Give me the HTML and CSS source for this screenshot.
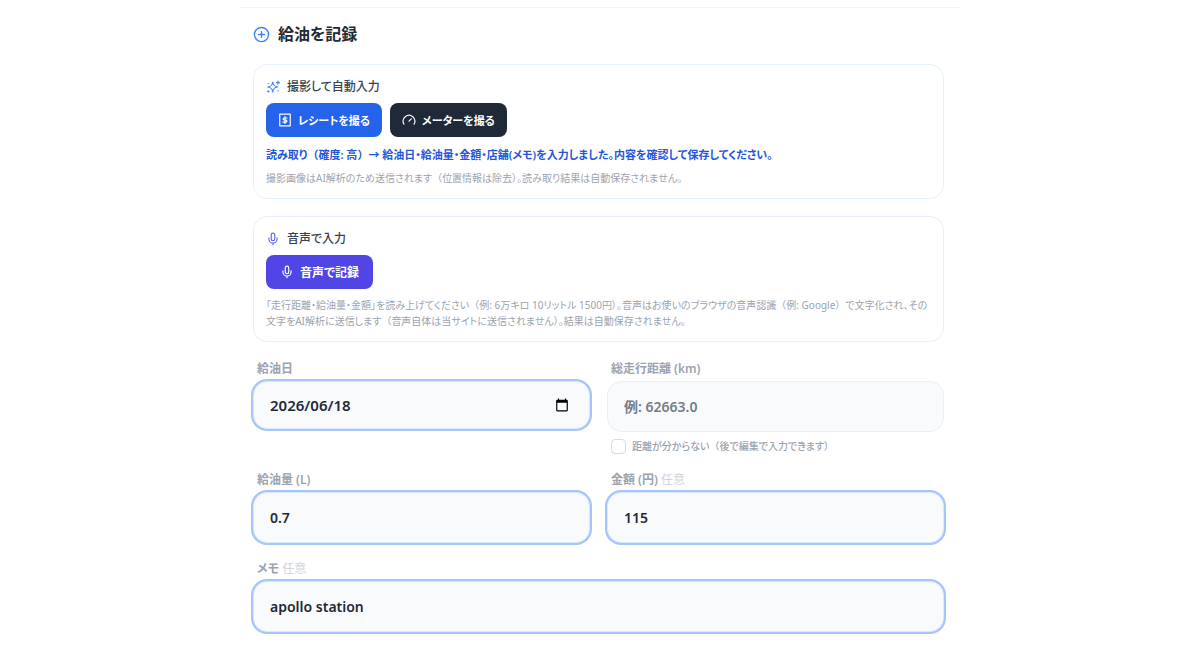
FILE: index.html
```html
<!DOCTYPE html>
<html lang="ja">
<head>
<meta charset="utf-8">
<meta name="viewport" content="width=device-width, initial-scale=1">
<title>給油を記録</title>
<link rel="stylesheet" href="styles.css">
</head>
<body>
<main class="page">
  <h1 class="title">
    <svg class="icon icon-title" viewBox="0 0 24 24" aria-hidden="true"><circle cx="12" cy="12" r="10"/><path d="M8 12h8M12 8v8"/></svg>
    給油を記録
  </h1>
  <form class="form">
    <section class="card card-photo">
      <h2 class="card-title">
        <svg class="icon icon-card" viewBox="0 0 24 24" aria-hidden="true"><path d="M11.500 3.500c.8 5.900 2.600 7.700 8.500 8.500-5.900.8-7.700 2.600-8.500 8.500-.8-5.900-2.600-7.700-8.500-8.500 5.900-.8 7.700-2.600 8.500-8.500zM20.500 2v5M18 4.500h5M3 19.500h2M4 18.500v2M3.500 6h.5M20.500 18.500h.5"/></svg>
        撮影して自動入力
      </h2>
      <div class="actions">
        <button type="button" class="btn btn-blue">
          <svg class="icon icon-btn" viewBox="0 0 24 24" aria-hidden="true"><path d="M3 2h18v20H3zM15.500 8.500h-5a1.750 1.750 0 0 0 0 3.500h3a1.750 1.750 0 0 1 0 3.500h-5M12 6v12"/></svg>
          レシートを撮る
        </button>
        <button type="button" class="btn btn-dark">
          <svg class="icon icon-btn" viewBox="0 0 24 24" aria-hidden="true"><path d="M12 14l4-4M3.340 19a10 10 0 1 1 17.320 0"/></svg>
          メーターを撮る
        </button>
      </div>
      <p class="result">読み取り<span class="full">（</span>確度: 高<span class="full">）</span>→ 給油日・給油量・金額・店舗(メモ)を入力しました。内容を確認して保存してください。</p>
      <p class="note">撮影画像はAI解析のため送信されます<span class="full">（</span>位置情報は除去）。読み取り結果は自動保存されません。</p>
    </section>

    <section class="card card-voice">
      <h2 class="card-title">
        <svg class="icon icon-card" viewBox="0 0 24 24" aria-hidden="true"><rect x="9" y="2" width="6" height="13" rx="3"/><path d="M19 10v2a7 7 0 0 1-14 0v-2M12 19v3"/></svg>
        音声で入力
      </h2>
      <div class="actions">
        <button type="button" class="btn btn-indigo">
          <svg class="icon icon-btn" viewBox="0 0 24 24" aria-hidden="true"><rect x="9" y="2" width="6" height="13" rx="3"/><path d="M19 10v2a7 7 0 0 1-14 0v-2M12 19v3"/></svg>
          音声で記録
        </button>
      </div>
      <p class="note">「走行距離・給油量・金額」を読み上げてください<span class="full">（</span>例: 6万キロ 10リットル 1500円）。音声はお使いのブラウザの音声認識<span class="full">（</span>例: Google<span class="full">）</span>で文字化され、その文字をAI解析に送信します<span class="full">（</span>音声自体は当サイトに送信されません）。結果は自動保存されません。</p>
    </section>

    <div class="fields">
      <div class="field">
        <label class="label" for="date">給油日</label>
        <div class="date-box filled">
          <input class="date-input" id="date" type="text" inputmode="numeric" value="2026/06/18">
          <button type="button" class="date-btn" aria-label="カレンダーを開く">
            <svg class="icon-date" viewBox="0 0 24 24" aria-hidden="true"><path d="M20 3h-1V1h-2v2H7V1H5v2H4c-1.100 0-2 .9-2 2v16c0 1.100.9 2 2 2h16c1.100 0 2-.9 2-2V5c0-1.100-.9-2-2-2zm0 18H4V8h16v13z"/></svg>
          </button>
        </div>
      </div>
      <div class="field">
        <label class="label" for="odo">総走行距離 (km)</label>
        <input class="input" id="odo" type="text" inputmode="decimal" placeholder="例: 62663.0">
        <label class="check"><input class="check-box" type="checkbox"><span>距離が分からない<span class="full">（</span>後で編集で入力できます）</span></label>
      </div>
      <div class="field">
        <label class="label" for="liters">給油量 (L)</label>
        <input class="input filled" id="liters" type="text" inputmode="decimal" value="0.7">
      </div>
      <div class="field">
        <label class="label" for="yen">金額 (円) <span class="optional">任意</span></label>
        <input class="input filled" id="yen" type="text" inputmode="numeric" value="115">
      </div>
      <div class="field field-wide">
        <label class="label" for="memo">メモ <span class="optional">任意</span></label>
        <input class="input filled" id="memo" type="text" value="apollo station">
      </div>
    </div>
  </form>
</main>
</body>
</html>
```
FILE: styles.css
```css
* {
  box-sizing: border-box;
}

body {
  margin: 0;
  padding-top: 7px;
  background: #fff;
  color: #1f2937;
  font-family: "Noto Sans", "Noto Sans CJK JP", sans-serif;
  font-feature-settings: "palt";
  text-spacing-trim: space-all;
}

.page {
  max-width: 720px;
  margin: 0 auto;
  padding: 15px 16px 16px 13px;
  border-top: 1px solid #f3f4f6;
}

.full {
  font-feature-settings: normal;
}

.icon {
  flex: none;
  fill: none;
  stroke: currentColor;
  stroke-width: 2;
  stroke-linecap: round;
  stroke-linejoin: round;
}

.title {
  display: flex;
  align-items: center;
  gap: 8px;
  margin: 0 0 18px;
  font-size: 16px;
  line-height: 23px;
  font-weight: 600;
}

.icon-title {
  width: 17px;
  height: 17px;
  color: #3b82f6;
}

.card {
  margin-bottom: 17px;
  padding: 13px 12px 12px;
  border: 1px solid #e6f0ff;
  border-radius: 14px;
}

.card-voice {
  margin-bottom: 18px;
  border-color: #e8edff;
}

.card-title {
  display: flex;
  align-items: center;
  gap: 7px;
  margin: 0 0 8px;
  color: #374151;
  font-size: 12px;
  line-height: 17px;
  font-weight: 500;
}

.icon-card {
  width: 14px;
  height: 14px;
  color: #3b82f6;
}

.card-voice .icon-card {
  color: #6366f1;
}

.actions {
  display: flex;
  gap: 8px;
}

.btn {
  display: flex;
  align-items: center;
  gap: 6px;
  height: 34px;
  padding: 0 12px;
  border: 0;
  border-radius: 8px;
  color: #fff;
  font: inherit;
  font-feature-settings: inherit;
  font-size: 11px;
  font-weight: 700;
}

.icon-btn {
  width: 14px;
  height: 14px;
}

.btn-blue {
  background: #2563eb;
}

.btn-dark {
  background: #1f2937;
}

.btn-indigo {
  padding: 0 14px;
  background: #4f46e5;
  font-size: 12px;
}

.result {
  margin: 9px 0 0;
  color: #2456d8;
  font-size: 11px;
  line-height: 17px;
  font-weight: 600;
}

.note {
  margin: 7px 0 0;
  color: #9ca3af;
  font-size: 10px;
  line-height: 16px;
}

.card-voice .note {
  margin-top: 8px;
}

.fields {
  display: grid;
  grid-template-columns: 1fr 1fr;
  gap: 17px;
}

.field {
  display: flex;
  flex-direction: column;
}

.field-wide {
  grid-column: 1 / -1;
}

.label {
  margin: 0 4px 4px;
  color: #9ca3af;
  font-size: 12px;
  line-height: 17px;
  font-weight: 600;
}

.optional {
  color: #d1d5db;
  font-weight: 400;
}

.input,
.date-box {
  width: 100%;
  height: 51px;
  padding: 0 16px;
  border: 1px solid #eceef1;
  border-radius: 14px;
  background: #f9fafb;
}

.input,
.date-input {
  color: #1f2937;
  font: inherit;
  font-size: 14px;
  font-weight: 600;
}

.input::placeholder {
  color: #757d88;
}

.input.filled,
.date-box.filled {
  border-color: #dbe7fb;
  box-shadow: 0 0 0 2px #a5c5fb;
}

.date-box {
  display: flex;
  align-items: center;
  height: 48px;
}

.date-input {
  flex: 1;
  min-width: 0;
  padding: 0;
  border: 0;
  outline: 0;
  background: none;
  font-size: 15px;
}

.date-btn {
  display: flex;
  padding: 4px;
  border: 0;
  background: none;
}

.icon-date {
  width: 14px;
  height: 14px;
}

.check {
  display: flex;
  align-items: center;
  gap: 6px;
  margin: 6px 4px 0;
  color: #9ca3af;
  font-size: 10px;
  line-height: 16px;
  font-weight: 500;
}

.check-box {
  appearance: none;
  width: 15px;
  height: 15px;
  margin: 0;
  border: 1px solid #d9dce1;
  border-radius: 4px;
  background: #fff;
}
```
